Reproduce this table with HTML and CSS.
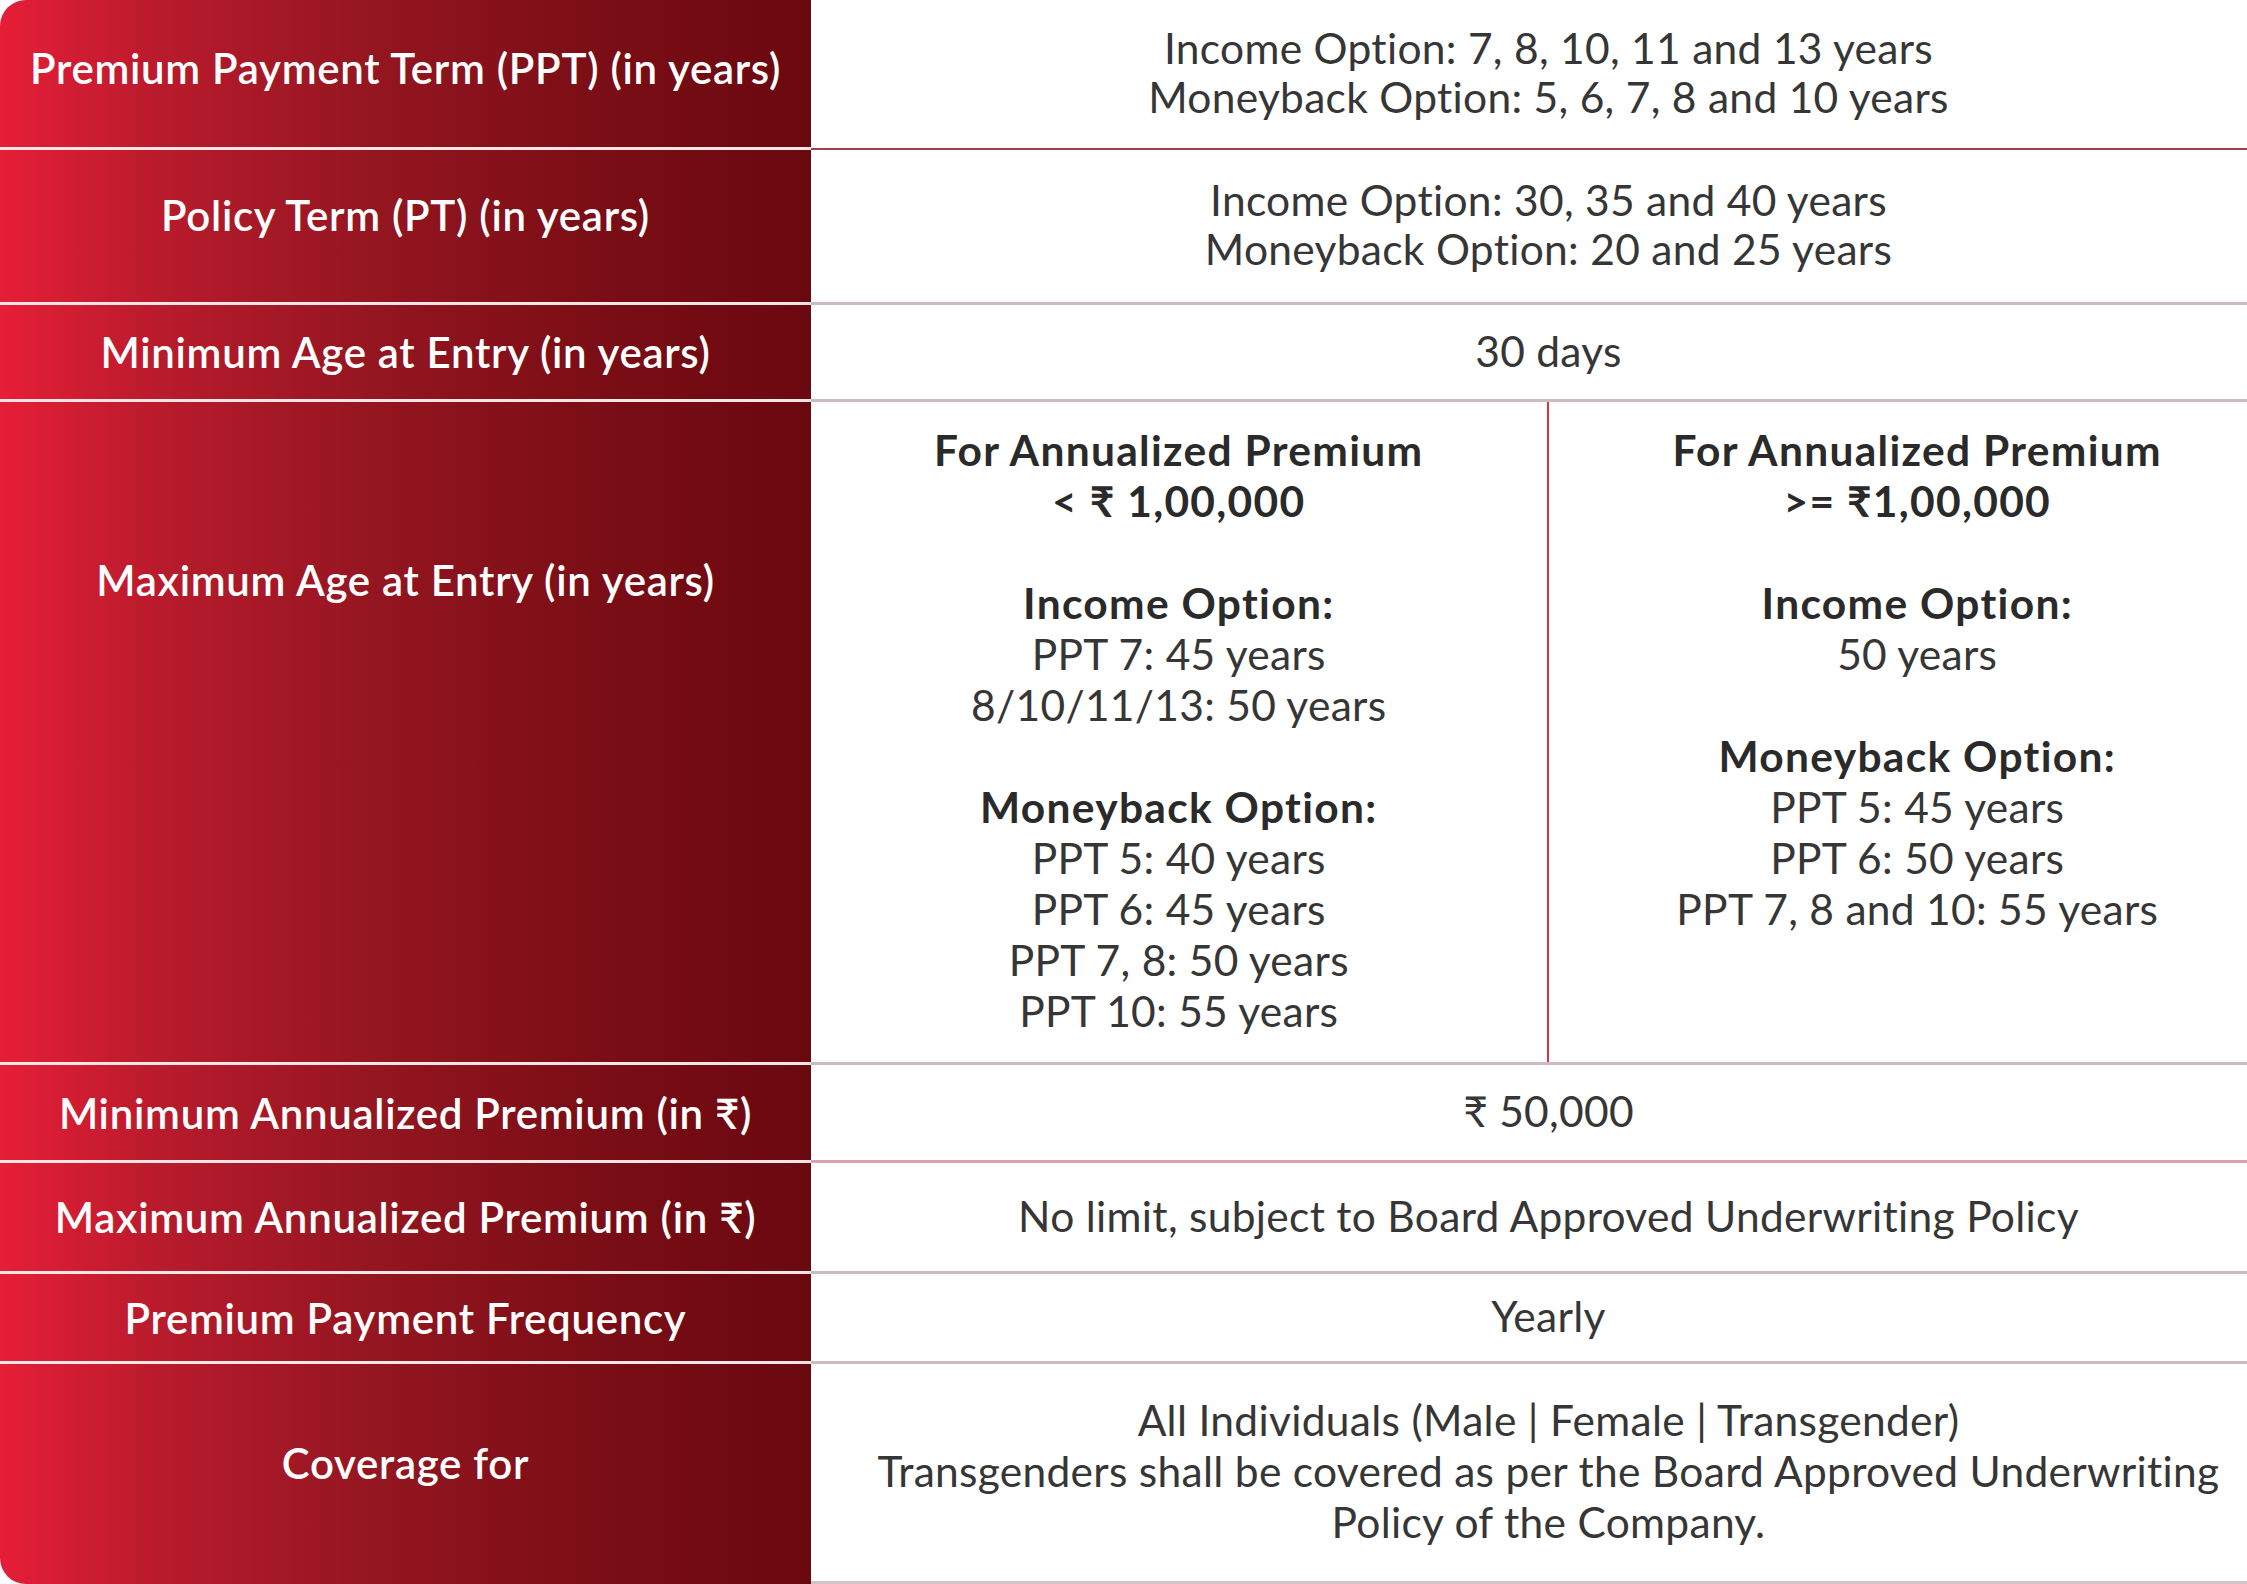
FILE: index.html
```html
<!DOCTYPE html>
<html lang="en">
<head>
<meta charset="utf-8">
<title>Policy Details</title>
<link rel="stylesheet" href="styles.css">
</head>
<body>
<div class="table">
  <div class="row row--ppt">
    <div class="label label--first label--raise">Premium Payment Term (PPT) (in years)</div>
    <div class="value value--dark">Income Option: 7, 8, 10, 11 and 13 years<br>Moneyback Option: 5, 6, 7, 8 and 10 years</div>
  </div>
  <div class="row row--pt">
    <div class="label label--raise-more">Policy Term (PT) (in years)</div>
    <div class="value">Income Option: 30, 35 and 40 years<br>Moneyback Option: 20 and 25 years</div>
  </div>
  <div class="row row--min">
    <div class="label">Minimum Age at Entry (in years)</div>
    <div class="value">30 days</div>
  </div>
  <div class="row row--max">
    <div class="label label--top">Maximum Age at Entry (in years)</div>
    <div class="split">
      <div class="split-cell split-cell--left">
        <p class="strong">For Annualized Premium<br>&lt; ₹ 1,00,000</p>
        <p class="gap"><span class="strong">Income Option:</span><br>PPT 7: 45 years<br>8/10/11/13: 50 years</p>
        <p class="gap"><span class="strong">Moneyback Option:</span><br>PPT 5: 40 years<br>PPT 6: 45 years<br>PPT 7, 8: 50 years<br>PPT 10: 55 years</p>
      </div>
      <div class="split-cell">
        <p class="strong">For Annualized Premium<br>&gt;= ₹1,00,000</p>
        <p class="gap"><span class="strong">Income Option:</span><br>50 years</p>
        <p class="gap"><span class="strong">Moneyback Option:</span><br>PPT 5: 45 years<br>PPT 6: 50 years<br>PPT 7, 8 and 10: 55 years</p>
      </div>
    </div>
  </div>
  <div class="row row--minprem">
    <div class="label">Minimum Annualized Premium (in ₹)</div>
    <div class="value value--rose">₹ 50,000</div>
  </div>
  <div class="row row--maxprem">
    <div class="label">Maximum Annualized Premium (in ₹)</div>
    <div class="value">No limit, subject to Board Approved Underwriting Policy</div>
  </div>
  <div class="row row--freq">
    <div class="label">Premium Payment Frequency</div>
    <div class="value">Yearly</div>
  </div>
  <div class="row row--cover">
    <div class="label label--last label--raise-more">Coverage for</div>
    <div class="value">All Individuals (Male | Female | Transgender)<br>Transgenders shall be covered as per the Board Approved Underwriting<br>Policy of the Company.</div>
  </div>
</div>
</body>
</html>
```
FILE: styles.css
```css
html, body {
  margin: 0;
  padding: 0;
  background: #ffffff;
  overflow: hidden;
}

body {
  font-family: Lato, "Noto Sans", "DejaVu Sans", sans-serif;
}

.table {
  width: 2286px;
  display: flex;
  flex-direction: column;
}

.row {
  display: grid;
  grid-template-columns: 811px 1fr;
  box-sizing: border-box;
}

.row--ppt { height: 150px; }
.row--pt { height: 155px; }
.row--min { height: 97px; }
.row--max { height: 663px; }
.row--minprem { height: 98px; }
.row--maxprem { height: 111px; }
.row--freq { height: 90px; }
.row--cover { height: 220px; }

.label {
  display: flex;
  align-items: center;
  justify-content: center;
  text-align: center;
  color: #ffffff;
  font-size: 42px;
  font-weight: 600;
  letter-spacing: 0.7px;
  line-height: 50px;
  background: linear-gradient(to right, #e61e37 0%, #b81b2c 20%, #951621 45%, #7c0e16 72%, #6a0810 100%);
  border-bottom: 3px solid #f3e4e6;
  box-sizing: border-box;
}

.label--first { border-top-left-radius: 26px; }
.label--last { border-bottom-left-radius: 26px; border-bottom: 0; }
.label--raise { padding-bottom: 12px; }
.label--raise-more { padding-bottom: 22px; }
.label--top { align-items: flex-start; padding-top: 153px; }

.value {
  display: flex;
  align-items: center;
  justify-content: center;
  text-align: center;
  color: #363636;
  font-size: 42.5px;
  letter-spacing: 0.3px;
  line-height: 49px;
  border-bottom: 3px solid #cdbabd;
  box-sizing: border-box;
  padding-bottom: 4px;
}

.value--dark { border-bottom: 2px solid #9a4450; }
.value--rose { border-bottom-color: #d9a3ab; }
.row--cover .value { border-bottom-color: #d2c3c5; line-height: 51px; }

.split {
  display: grid;
  grid-template-columns: 1fr 1fr;
  border-bottom: 3px solid #cdbabd;
  box-sizing: border-box;
}

.split-cell {
  padding-top: 22px;
  text-align: center;
  color: #363636;
  font-size: 42.5px;
  letter-spacing: 0.3px;
  line-height: 51px;
}

.split-cell--left {
  border-right: 2px solid #d23545;
}

.split-cell p {
  margin: 0;
}

.split-cell .gap {
  margin-top: 51px;
}

.strong {
  font-weight: 700;
  letter-spacing: 1.3px;
  color: #2a2a2a;
}
```
